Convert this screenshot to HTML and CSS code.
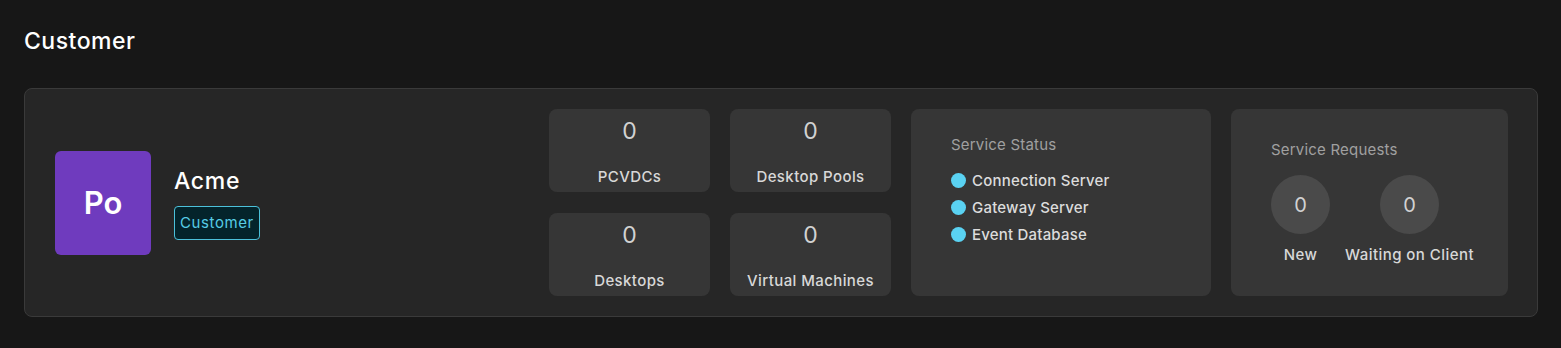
FILE: index.html
```html
<!DOCTYPE html>
<html lang="en">
<head>
  <meta charset="UTF-8" />
  <meta name="viewport" content="width=device-width, initial-scale=1.0"/>
  <title>Customer</title>
  <link rel="stylesheet" href="styles.css">
</head>
<body>
  <div class="page">
    <h2 class="page-title">Customer</h2>

    <div class="customer-card">
      <div class="identity">
        <div class="avatar">Po</div>
        <div class="identity-text">
          <div class="name">Acme</div>
          <span class="badge">Customer</span>
        </div>
      </div>

      <div class="stats">
        <div class="stat"><span class="stat-value">0</span><span class="stat-label">PCVDCs</span></div>
        <div class="stat"><span class="stat-value">0</span><span class="stat-label">Desktop Pools</span></div>
        <div class="stat"><span class="stat-value">0</span><span class="stat-label">Desktops</span></div>
        <div class="stat"><span class="stat-value">0</span><span class="stat-label">Virtual Machines</span></div>
      </div>

      <div class="panel status">
        <div class="panel-title">Service Status</div>
        <ul class="status-list">
          <li><span class="dot"></span>Connection Server</li>
          <li><span class="dot"></span>Gateway Server</li>
          <li><span class="dot"></span>Event Database</li>
        </ul>
      </div>

      <div class="panel requests">
        <div class="panel-title">Service Requests</div>
        <div class="request-row">
          <div class="request"><div class="bubble">0</div><span>New</span></div>
          <div class="request"><div class="bubble">0</div><span>Waiting on Client</span></div>
        </div>
      </div>
    </div>
  </div>
</body>
</html>
```

FILE: styles.css
```css
body {
  margin: 0;
  background: #171717;
  color: #fff;
  font-family: 'Inter', 'Noto Sans', sans-serif;
}

.page {
  padding: 26px 23px 0 24px;
}

.page-title {
  margin: 0 0 32px;
  font-size: 23px;
  line-height: 30px;
  font-weight: 500;
  letter-spacing: 0.5px;
}

.customer-card {
  display: flex;
  align-items: stretch;
  gap: 20px;
  padding: 20px 29px 20px 30px;
  background: #262626;
  border: 1px solid #3a3a3a;
  border-radius: 8px;
}

.identity {
  flex: 1;
  display: flex;
  align-items: center;
  gap: 23px;
}

.avatar {
  width: 96px;
  height: 104px;
  border-radius: 6px;
  background: #6f3bbe;
  display: flex;
  align-items: center;
  justify-content: center;
  font-size: 31px;
  font-weight: 600;
}

.name {
  font-size: 23px;
  font-weight: 500;
  line-height: 24px;
  letter-spacing: 0.7px;
  margin: 3px 0 13px;
}

.badge {
  display: inline-block;
  padding: 6px 5px;
  font-size: 15px;
  line-height: 20px;
  letter-spacing: 0.6px;
  color: #56cde6;
  background: #04242b;
  border: 1px solid #4cc1da;
  border-radius: 4px;
}

.stats {
  display: grid;
  grid-template-columns: 161px 161px;
  grid-auto-rows: 83px;
  column-gap: 20px;
  row-gap: 21px;
}

.stat {
  background: #363636;
  border-radius: 8px;
  display: flex;
  flex-direction: column;
  align-items: center;
  justify-content: space-between;
  padding: 9px 0 5px;
}

.stat-value {
  font-size: 23px;
  line-height: 26px;
  color: #d2d2d2;
}

.stat-label {
  font-size: 15px;
  line-height: 20px;
  font-weight: 500;
  letter-spacing: 0.4px;
  color: #d8d8d8;
}

.panel {
  background: #363636;
  border-radius: 8px;
  box-sizing: border-box;
}

.panel-title {
  font-size: 15px;
  line-height: 20px;
  letter-spacing: 0.2px;
  color: #a0a0a0;
}

.status {
  width: 300px;
  padding: 26px 40px 0;
}

.status-list {
  list-style: none;
  margin: 12px 0 0;
  padding: 0;
}

.status-list li {
  display: flex;
  align-items: center;
  gap: 6px;
  font-size: 15px;
  line-height: 27px;
  font-weight: 500;
  letter-spacing: 0.2px;
  color: #dcdcdc;
}

.dot {
  width: 15px;
  height: 15px;
  border-radius: 50%;
  background: #5ad2f2;
}

.requests {
  width: 277px;
  padding: 31px 40px 0;
}

.request-row {
  display: flex;
  gap: 15px;
  margin-top: 15px;
}

.request {
  display: flex;
  flex-direction: column;
  align-items: center;
  gap: 11px;
  font-size: 15px;
  line-height: 20px;
  font-weight: 500;
  letter-spacing: 0.45px;
  white-space: nowrap;
  color: #d8d8d8;
}

.bubble {
  width: 59px;
  height: 59px;
  border-radius: 50%;
  background: #4a4a4a;
  display: flex;
  align-items: center;
  justify-content: center;
  font-size: 20px;
  font-weight: 400;
  letter-spacing: 0;
  color: #d2d2d2;
}
```
